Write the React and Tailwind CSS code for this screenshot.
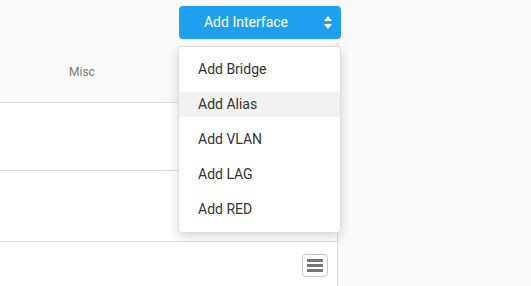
import { useState } from 'react';

const items = ['Add Bridge', 'Add Alias', 'Add VLAN', 'Add LAG', 'Add RED'];

function SortIcon() {
  return (
    <svg width="8" height="13" viewBox="0 0 8 13" className="fill-white">
      <path d="M4 0 L8 5 L0 5 Z" />
      <path d="M0 8 L8 8 L4 13 Z" />
    </svg>
  );
}

export default function App() {
  const [active] = useState(1);

  return (
    <div className="h-[286px] w-[531px] overflow-hidden bg-[#f9f9f9] font-['Roboto',sans-serif]">
      <div className="relative flex h-[42px] w-[341px] justify-end pt-[6px]">
        <button className="flex h-[33px] w-[162px] items-center rounded-[4px] bg-[#1fa0ef] pl-[8px] pr-[9px] text-[14px] text-white">
          <span className="mr-[19px] flex-1 text-center">Add Interface</span>
          <SortIcon />
        </button>
        <div className="absolute left-[178px] top-[46px] z-10 flex w-[163px] flex-col gap-[10px] rounded-[4px] border border-[#dedede] bg-white py-[10px] shadow-[0_4px_12px_rgba(0,0,0,0.15)]">
          {items.map((item, index) => (
            <div
              key={item}
              className={`flex h-[25px] items-center pl-[19px] text-[14px] text-[#333] ${
                index === active ? 'bg-[#f2f2f2]' : ''
              }`}
            >
              {item}
            </div>
          ))}
        </div>
      </div>

      <div className="w-[338px] border-r border-[#dcdcdc]">
        <div className="flex h-[60px] items-center pl-[69px] text-[12px] text-[#7a7a7a]">
          Misc
        </div>
        <div className="h-[68px] border-t border-[#dcdcdc] bg-white" />
        <div className="h-[71px] border-t border-[#dcdcdc] bg-white" />
        <div className="flex h-[60px] justify-end border-t border-[#dcdcdc] bg-white pr-[9px] pt-[12px]">
          <button className="flex h-[23px] w-[26px] flex-col items-center justify-center gap-[2px] rounded-[4px] border border-[#c8c8c8] bg-white">
            <span className="h-[3px] w-[16px] bg-[#777]" />
            <span className="h-[3px] w-[16px] bg-[#777]" />
            <span className="h-[3px] w-[16px] bg-[#777]" />
          </button>
        </div>
      </div>
    </div>
  );
}
